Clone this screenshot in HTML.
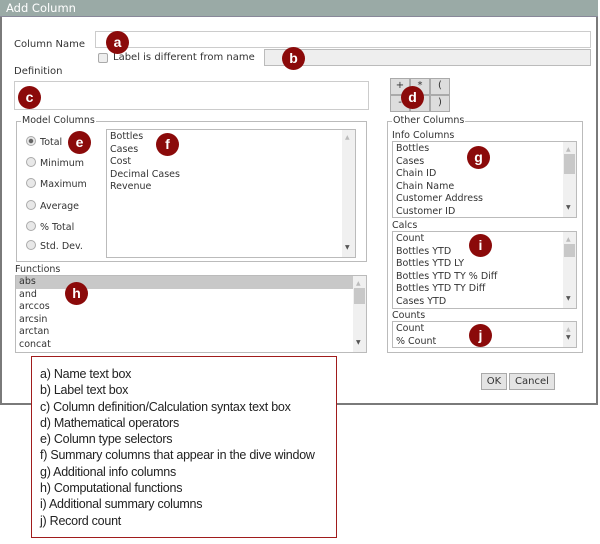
<!DOCTYPE html>
<html><head><style>
*{box-sizing:border-box}
body{margin:0;width:600px;height:544px;background:#fff;font-family:"DejaVu Sans","Liberation Sans",sans-serif;font-size:9.5px;color:#333;position:relative;overflow:hidden}
.a{position:absolute}
.dlg{left:0;top:0;width:598px;height:405px;border:2px solid #7a7a7a;border-top:none;background:#fff}
.title{left:0;top:0;width:598px;height:17px;background:#9aaaa6;color:#fff;font-size:11.5px;padding:1px 0 0 6px;border-bottom:1px solid #889}
.inp{border:1px solid #ccc;background:#fff}
.list{border:1px solid #bbb;background:#fff;line-height:12.6px;padding:1px 3px;overflow:hidden}
.sb{position:absolute;right:0;top:0;bottom:0;width:13px;background:#f0f0f0}
.sb:before{content:"▲";position:absolute;top:2px;left:3px;font-size:6px;color:#bbb}
.sb:after{content:"▼";position:absolute;bottom:2px;left:3px;font-size:6px;color:#555}
.th{position:absolute;left:1px;width:11px;top:12px;height:16px;background:#c8c8c8}
.fs{border:1px solid #bbb}
.lg{background:#fff;padding:0 1px;line-height:10px}
.m{width:23px;height:23px;border-radius:50%;background:#8b0a0a;color:#fff;font-weight:bold;font-size:14px;text-align:center;line-height:22px;font-family:"Liberation Sans",sans-serif}
.rad{width:10px;height:10px;border-radius:50%;border:1px solid #aaa;background:#e8e8e8}
.btn{border:1px solid #aaa;background:#e4e4e4;text-align:center;font-size:10px;color:#333}
.op{width:20px;height:17px;border:1px solid #aaa;background:#ddd;text-align:center;font-size:10px;line-height:13px}
.leg{left:31px;top:356px;width:306px;height:182px;border:1px solid #a01c1c;font-family:"Liberation Sans",sans-serif;font-size:12.5px;color:#222;letter-spacing:-0.25px;padding:9px 0 0 8px;line-height:16.3px;background:#fff;white-space:nowrap}
</style></head><body>
<div class="a dlg"></div>
<div class="a title">Add Column</div>
<div class="a" style="left:14px;top:39px;font-size:10px">Column Name</div>
<div class="a inp" style="left:95px;top:31px;width:496px;height:17px"></div>
<div class="a" style="left:98px;top:53px;width:10px;height:10px;border:1px solid #aaa;background:#eee;border-radius:2px"></div>
<div class="a" style="left:113px;top:52px;font-size:10px">Label is different from name</div>
<div class="a" style="left:264px;top:49px;width:327px;height:17px;background:#eee;border:1px solid #bbb"></div>
<div class="a" style="left:14px;top:66px;font-size:10px">Definition</div>
<div class="a inp" style="left:14px;top:81px;width:355px;height:29px"></div>
<div class="a op" style="left:390px;top:78px">+</div>
<div class="a op" style="left:410px;top:78px">*</div>
<div class="a op" style="left:430px;top:78px">(</div>
<div class="a op" style="left:390px;top:95px">-</div>
<div class="a op" style="left:410px;top:95px">/</div>
<div class="a op" style="left:430px;top:95px">)</div>

<div class="a fs" style="left:16px;top:121px;width:351px;height:141px"></div>
<div class="a lg" style="left:21px;top:116px">Model Columns</div>
<div class="a rad" style="left:26px;top:136px;background:radial-gradient(circle,#666 2px,#e8e8e8 2.5px)"></div><div class="a" style="left:40px;top:137px">Total</div>
<div class="a rad" style="left:26px;top:157px"></div><div class="a" style="left:40px;top:158px">Minimum</div>
<div class="a rad" style="left:26px;top:178px"></div><div class="a" style="left:40px;top:179px">Maximum</div>
<div class="a rad" style="left:26px;top:200px"></div><div class="a" style="left:40px;top:201px">Average</div>
<div class="a rad" style="left:26px;top:221px"></div><div class="a" style="left:40px;top:222px">% Total</div>
<div class="a rad" style="left:26px;top:240px"></div><div class="a" style="left:40px;top:241px">Std. Dev.</div>
<div class="a list" style="left:106px;top:129px;width:250px;height:129px">Bottles<br>Cases<br>Cost<br>Decimal Cases<br>Revenue<div class="sb"></div></div>

<div class="a" style="left:15px;top:264px">Functions</div>
<div class="a list" style="left:15px;top:275px;width:352px;height:78px;padding:0"><div style="background:#c8c8c8;padding-left:3px;margin-right:13px">abs</div><div style="padding-left:3px">and<br>arccos<br>arcsin<br>arctan<br>concat</div><div class="sb"><div class="th"></div></div></div>

<div class="a fs" style="left:387px;top:121px;width:196px;height:232px"></div>
<div class="a lg" style="left:392px;top:116px">Other Columns</div>
<div class="a" style="left:392px;top:130px">Info Columns</div>
<div class="a list" style="left:392px;top:141px;width:185px;height:77px">Bottles<br>Cases<br>Chain ID<br>Chain Name<br>Customer Address<br>Customer ID<div class="sb"><div class="th" style="height:20px"></div></div></div>
<div class="a" style="left:392px;top:220px">Calcs</div>
<div class="a list" style="left:392px;top:231px;width:185px;height:78px">Count<br>Bottles YTD<br>Bottles YTD LY<br>Bottles YTD TY % Diff<br>Bottles YTD TY Diff<br>Cases YTD<div class="sb"><div class="th" style="height:13px"></div></div></div>
<div class="a" style="left:392px;top:310px">Counts</div>
<div class="a list" style="left:392px;top:321px;width:185px;height:27px">Count<br>% Count<div class="sb" style=""></div></div>

<div class="a btn" style="left:481px;top:373px;width:26px;height:17px;line-height:15px">OK</div>
<div class="a btn" style="left:509px;top:373px;width:46px;height:17px;line-height:15px">Cancel</div>

<div class="a leg">a) Name text box<br>b) Label text box<br>c) Column definition/Calculation syntax text box<br>d) Mathematical operators<br>e) Column type selectors<br>f) Summary columns that appear in the dive window<br>g) Additional info columns<br>h) Computational functions<br>i) Additional summary columns<br>j) Record count</div>

<div class="a m" style="left:106px;top:31px">a</div>
<div class="a m" style="left:282px;top:47px">b</div>
<div class="a m" style="left:18px;top:86px">c</div>
<div class="a m" style="left:401px;top:86px">d</div>
<div class="a m" style="left:68px;top:131px">e</div>
<div class="a m" style="left:156px;top:133px">f</div>
<div class="a m" style="left:467px;top:146px">g</div>
<div class="a m" style="left:65px;top:282px">h</div>
<div class="a m" style="left:469px;top:234px">i</div>
<div class="a m" style="left:469px;top:324px">j</div>
</body></html>
